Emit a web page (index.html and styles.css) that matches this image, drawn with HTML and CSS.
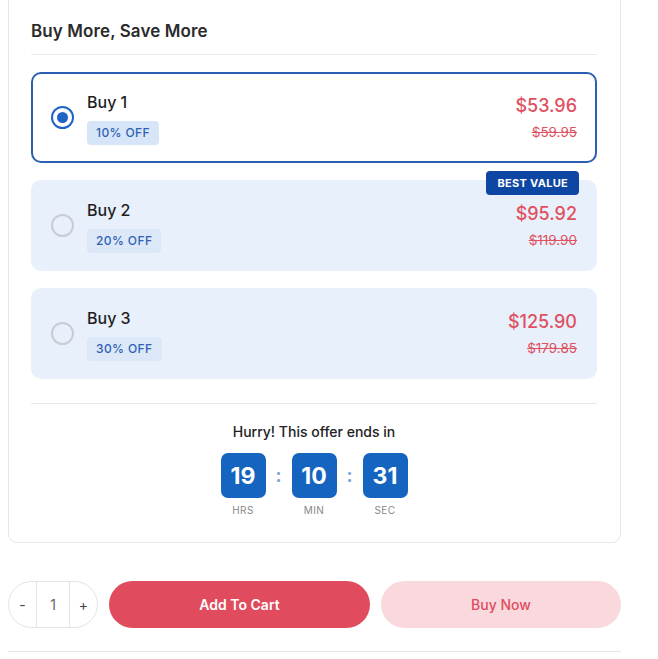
FILE: index.html
```html
<!DOCTYPE html>
<html>
<head>
<meta charset="utf-8">
<link rel="stylesheet" href="styles.css">
</head>
<body>
<div class="page">
  <section class="card">
    <h2 class="heading">Buy More, Save More</h2>
    <div class="options">
      <div class="option selected">
        <span class="radio"></span>
        <div class="info">
          <div class="title">Buy 1</div>
          <span class="off">10% OFF</span>
        </div>
        <div class="prices">
          <div class="price">$53.96</div>
          <div class="old">$59.95</div>
        </div>
      </div>
      <div class="option">
        <span class="best">BEST VALUE</span>
        <span class="radio"></span>
        <div class="info">
          <div class="title">Buy 2</div>
          <span class="off">20% OFF</span>
        </div>
        <div class="prices">
          <div class="price">$95.92</div>
          <div class="old">$119.90</div>
        </div>
      </div>
      <div class="option">
        <span class="radio"></span>
        <div class="info">
          <div class="title">Buy 3</div>
          <span class="off">30% OFF</span>
        </div>
        <div class="prices">
          <div class="price">$125.90</div>
          <div class="old">$179.85</div>
        </div>
      </div>
    </div>
    <div class="timer">
      <div class="hurry">Hurry! This offer ends in</div>
      <div class="clock">
        <div class="unit"><div class="box">19</div><div class="lbl">HRS</div></div>
        <div class="colon">:</div>
        <div class="unit"><div class="box">10</div><div class="lbl">MIN</div></div>
        <div class="colon">:</div>
        <div class="unit"><div class="box">31</div><div class="lbl">SEC</div></div>
      </div>
    </div>
  </section>
  <div class="actions">
    <div class="qty">
      <span class="q-btn">-</span>
      <span class="q-val">1</span>
      <span class="q-btn">+</span>
    </div>
    <button class="btn cart">Add To Cart</button>
    <button class="btn buy">Buy Now</button>
  </div>
  <div class="rule"></div>
</div>
</body>
</html>
```

FILE: styles.css
```css
* { box-sizing: border-box; }
html, body { margin: 0; padding: 0; background: #fff; }
body {
  font-family: "Inter", "Noto Sans", sans-serif;
  color: #222;
  overflow: hidden;
}
.page {
  width: 613px;
  margin-left: 8px;
}
.card {
  margin-top: -1px;
  border: 1px solid #e8e8e8;
  border-radius: 0 0 9px 9px;
  padding: 20px 23px 25px 22px;
}
.heading {
  margin: 0;
  font-size: 17px;
  line-height: 22px;
  font-weight: 600;
  color: #2b2b2b;
  padding-bottom: 12px;
  border-bottom: 1px solid #ececec;
  letter-spacing: 0.1px;
}
.options {
  margin-top: 17px;
  display: flex;
  flex-direction: column;
  gap: 17px;
  padding-bottom: 24px;
  border-bottom: 1px solid #e8e8e8;
}
.option {
  position: relative;
  height: 91px;
  border: 2px solid transparent;
  border-radius: 10px;
  background: #e7f0fb;
  display: flex;
  align-items: center;
  padding: 0 18px 0 18px;
}
.option.selected {
  background: #fff;
  border-color: #2c5fb3;
}
.radio {
  width: 23px;
  height: 23px;
  border-radius: 50%;
  border: 2px solid #c9cdd2;
  flex: none;
  display: flex;
  align-items: center;
  justify-content: center;
}
.selected .radio {
  border: 2.5px solid #1f63c6;
}
.selected .radio::after {
  content: "";
  width: 11px;
  height: 11px;
  border-radius: 50%;
  background: #1f63c6;
}
.info {
  margin-left: 13px;
  display: flex;
  flex-direction: column;
  align-items: flex-start;
  gap: 8px;
  margin-top: 2px;
}
.title {
  font-size: 16px;
  line-height: 21px;
  font-weight: 500;
  color: #1f1f1f;
}
.off {
  background: #d6e5f7;
  color: #2f62b3;
  font-size: 12px;
  font-weight: 500;
  letter-spacing: 0.4px;
  height: 24px;
  line-height: 24px;
  padding: 0 9px;
  border-radius: 4px;
}
.option:not(.selected) .off { background: #dce8f8; }
.prices {
  margin-left: auto;
  text-align: right;
  display: flex;
  flex-direction: column;
  align-items: flex-end;
  gap: 4px;
}
.price {
  font-size: 18px;
  line-height: 24px;
  font-weight: 500;
  color: #e0505f;
}
.old {
  font-size: 13.5px;
  line-height: 20px;
  color: #e0505f;
  text-decoration: line-through;
}
.best {
  position: absolute;
  top: -11px;
  right: 16px;
  background: #0e46a3;
  color: #fff;
  font-size: 11px;
  font-weight: 700;
  letter-spacing: 0.3px;
  height: 24px;
  line-height: 24px;
  padding: 0 11px;
  border-radius: 4px;
}
.timer {
  display: flex;
  flex-direction: column;
  align-items: center;
  padding-top: 18px;
}
.hurry {
  font-size: 14px;
  line-height: 20px;
  font-weight: 500;
  color: #222;
}
.clock {
  margin-top: 11px;
  display: flex;
  align-items: flex-start;
}
.unit {
  display: flex;
  flex-direction: column;
  align-items: center;
}
.box {
  width: 45px;
  height: 45px;
  border-radius: 7px;
  background: #1565c0;
  color: #fff;
  font-size: 23px;
  font-weight: 700;
  display: flex;
  align-items: center;
  justify-content: center;
}
.lbl {
  margin-top: 5px;
  font-size: 10px;
  line-height: 14px;
  color: #888;
  letter-spacing: 0.4px;
}
.colon {
  width: 26px;
  height: 45px;
  display: flex;
  align-items: center;
  justify-content: center;
  color: #7ea3d6;
  font-size: 18px;
  font-weight: 700;
}
.actions {
  margin-top: 38px;
  display: flex;
  align-items: center;
  gap: 11px;
}
.qty {
  width: 90px;
  height: 47px;
  border: 1px solid #e3e3e3;
  border-radius: 24px;
  display: flex;
  flex: none;
}
.q-btn {
  width: 27px;
  display: flex;
  align-items: center;
  justify-content: center;
  font-size: 14px;
  color: #444;
}
.q-val {
  flex: 1;
  border-left: 1px solid #e3e3e3;
  border-right: 1px solid #e3e3e3;
  display: flex;
  align-items: center;
  justify-content: center;
  font-size: 14px;
  color: #666;
}
.btn {
  height: 47px;
  border: none;
  border-radius: 24px;
  font-family: "Inter", "Noto Sans", sans-serif;
  font-size: 14px;
  font-weight: 600;
  cursor: pointer;
}
.cart {
  width: 261px;
  background: #e14b5e;
  color: #fff;
}
.buy {
  width: 240px;
  background: #f9d9de;
  color: #e14b5e;
  font-weight: 500;
}
.rule {
  margin-top: 23px;
  border-top: 1px solid #e5e5e5;
}
```
